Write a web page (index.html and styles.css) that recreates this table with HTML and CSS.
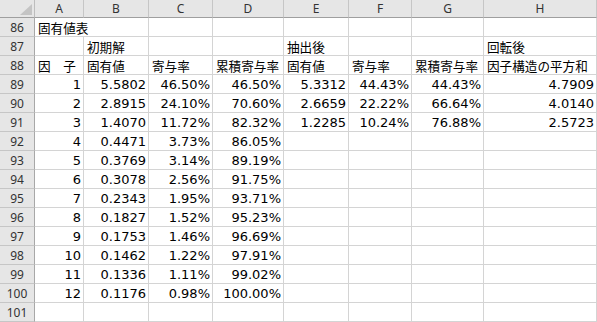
FILE: index.html
```html
<!DOCTYPE html>
<html lang="ja">
<head>
<meta charset="utf-8">
<title>固有値表</title>
<link rel="stylesheet" href="styles.css">
</head>
<body>
<div class="sheet">
  <div class="corner"><span class="tri"></span></div>
  <div class="ch">A</div><div class="ch">B</div><div class="ch">C</div><div class="ch">D</div><div class="ch">E</div><div class="ch">F</div><div class="ch">G</div><div class="ch">H</div>

  <div class="rh">86</div>
  <div class="c j ov">固有値表</div><div class="c"></div><div class="c"></div><div class="c"></div><div class="c"></div><div class="c"></div><div class="c"></div><div class="c"></div>

  <div class="rh">87</div>
  <div class="c"></div><div class="c j">初期解</div><div class="c"></div><div class="c"></div><div class="c j">抽出後</div><div class="c"></div><div class="c"></div><div class="c j">回転後</div>

  <div class="rh">88</div>
  <div class="c j">因　子</div><div class="c j">固有値</div><div class="c j">寄与率</div><div class="c j">累積寄与率</div><div class="c j">固有値</div><div class="c j">寄与率</div><div class="c j">累積寄与率</div><div class="c j">因子構造の平方和</div>

  <div class="rh">89</div>
  <div class="c n">1</div><div class="c n">5.5802</div><div class="c n">46.50%</div><div class="c n">46.50%</div><div class="c n">5.3312</div><div class="c n">44.43%</div><div class="c n">44.43%</div><div class="c n">4.7909</div>

  <div class="rh">90</div>
  <div class="c n">2</div><div class="c n">2.8915</div><div class="c n">24.10%</div><div class="c n">70.60%</div><div class="c n">2.6659</div><div class="c n">22.22%</div><div class="c n">66.64%</div><div class="c n">4.0140</div>

  <div class="rh">91</div>
  <div class="c n">3</div><div class="c n">1.4070</div><div class="c n">11.72%</div><div class="c n">82.32%</div><div class="c n">1.2285</div><div class="c n">10.24%</div><div class="c n">76.88%</div><div class="c n">2.5723</div>

  <div class="rh">92</div>
  <div class="c n">4</div><div class="c n">0.4471</div><div class="c n">3.73%</div><div class="c n">86.05%</div><div class="c"></div><div class="c"></div><div class="c"></div><div class="c"></div>

  <div class="rh">93</div>
  <div class="c n">5</div><div class="c n">0.3769</div><div class="c n">3.14%</div><div class="c n">89.19%</div><div class="c"></div><div class="c"></div><div class="c"></div><div class="c"></div>

  <div class="rh">94</div>
  <div class="c n">6</div><div class="c n">0.3078</div><div class="c n">2.56%</div><div class="c n">91.75%</div><div class="c"></div><div class="c"></div><div class="c"></div><div class="c"></div>

  <div class="rh">95</div>
  <div class="c n">7</div><div class="c n">0.2343</div><div class="c n">1.95%</div><div class="c n">93.71%</div><div class="c"></div><div class="c"></div><div class="c"></div><div class="c"></div>

  <div class="rh">96</div>
  <div class="c n">8</div><div class="c n">0.1827</div><div class="c n">1.52%</div><div class="c n">95.23%</div><div class="c"></div><div class="c"></div><div class="c"></div><div class="c"></div>

  <div class="rh">97</div>
  <div class="c n">9</div><div class="c n">0.1753</div><div class="c n">1.46%</div><div class="c n">96.69%</div><div class="c"></div><div class="c"></div><div class="c"></div><div class="c"></div>

  <div class="rh">98</div>
  <div class="c n">10</div><div class="c n">0.1462</div><div class="c n">1.22%</div><div class="c n">97.91%</div><div class="c"></div><div class="c"></div><div class="c"></div><div class="c"></div>

  <div class="rh">99</div>
  <div class="c n">11</div><div class="c n">0.1336</div><div class="c n">1.11%</div><div class="c n">99.02%</div><div class="c"></div><div class="c"></div><div class="c"></div><div class="c"></div>

  <div class="rh">100</div>
  <div class="c n">12</div><div class="c n">0.1176</div><div class="c n">0.98%</div><div class="c n">100.00%</div><div class="c"></div><div class="c"></div><div class="c"></div><div class="c"></div>

  <div class="rh">101</div>
  <div class="c"></div><div class="c"></div><div class="c"></div><div class="c"></div><div class="c"></div><div class="c"></div><div class="c"></div><div class="c"></div>
</div>
</body>
</html>
```
FILE: styles.css
```css
html, body {
  margin: 0;
  padding: 0;
  background: #ffffff;
}

.sheet {
  display: grid;
  grid-template-columns: 35px 49px 65px 64px 71px 65px 63px 72px 113px;
  grid-template-rows: 18px repeat(16, 19px);
  width: 597px;
  font-family: "DejaVu Sans", sans-serif;
  font-size: 13px;
  color: #000;
}

.corner {
  position: relative;
  background: #e6e6e6;
  border-right: 1px solid #bdbdbd;
  border-bottom: 1px solid #9f9f9f;
  box-sizing: border-box;
}

.tri {
  position: absolute;
  right: 2px;
  bottom: 2px;
  width: 0;
  height: 0;
  border-left: 12px solid transparent;
  border-bottom: 11px solid #c4c4c4;
}

.ch {
  background: #e6e6e6;
  border-right: 1px solid #c6c6c6;
  border-bottom: 1px solid #9f9f9f;
  box-sizing: border-box;
  font-family: "Noto Sans", sans-serif;
  font-size: 12px;
  line-height: 17px;
  text-align: center;
  color: #333;
}

.rh {
  background: #e6e6e6;
  border-right: 1px solid #a8a8a8;
  border-bottom: 1px solid #c6c6c6;
  box-sizing: border-box;
  font-family: "Noto Sans", sans-serif;
  font-size: 12px;
  line-height: 18px;
  padding-top: 1px;
  text-align: center;
  color: #333;
}

.c {
  border-right: 1px solid #d4d4d4;
  border-bottom: 1px solid #d4d4d4;
  box-sizing: border-box;
  height: 19px;
  padding: 1px 3px 0 3px;
  line-height: 18px;
  white-space: nowrap;
  overflow: hidden;
}

.n {
  text-align: right;
  padding-right: 2px;
}

.j {
  font-family: "Noto Sans CJK JP", sans-serif;
  font-size: 12.6px;
}

.ov {
  border-right: none;
  overflow: visible;
}
```
